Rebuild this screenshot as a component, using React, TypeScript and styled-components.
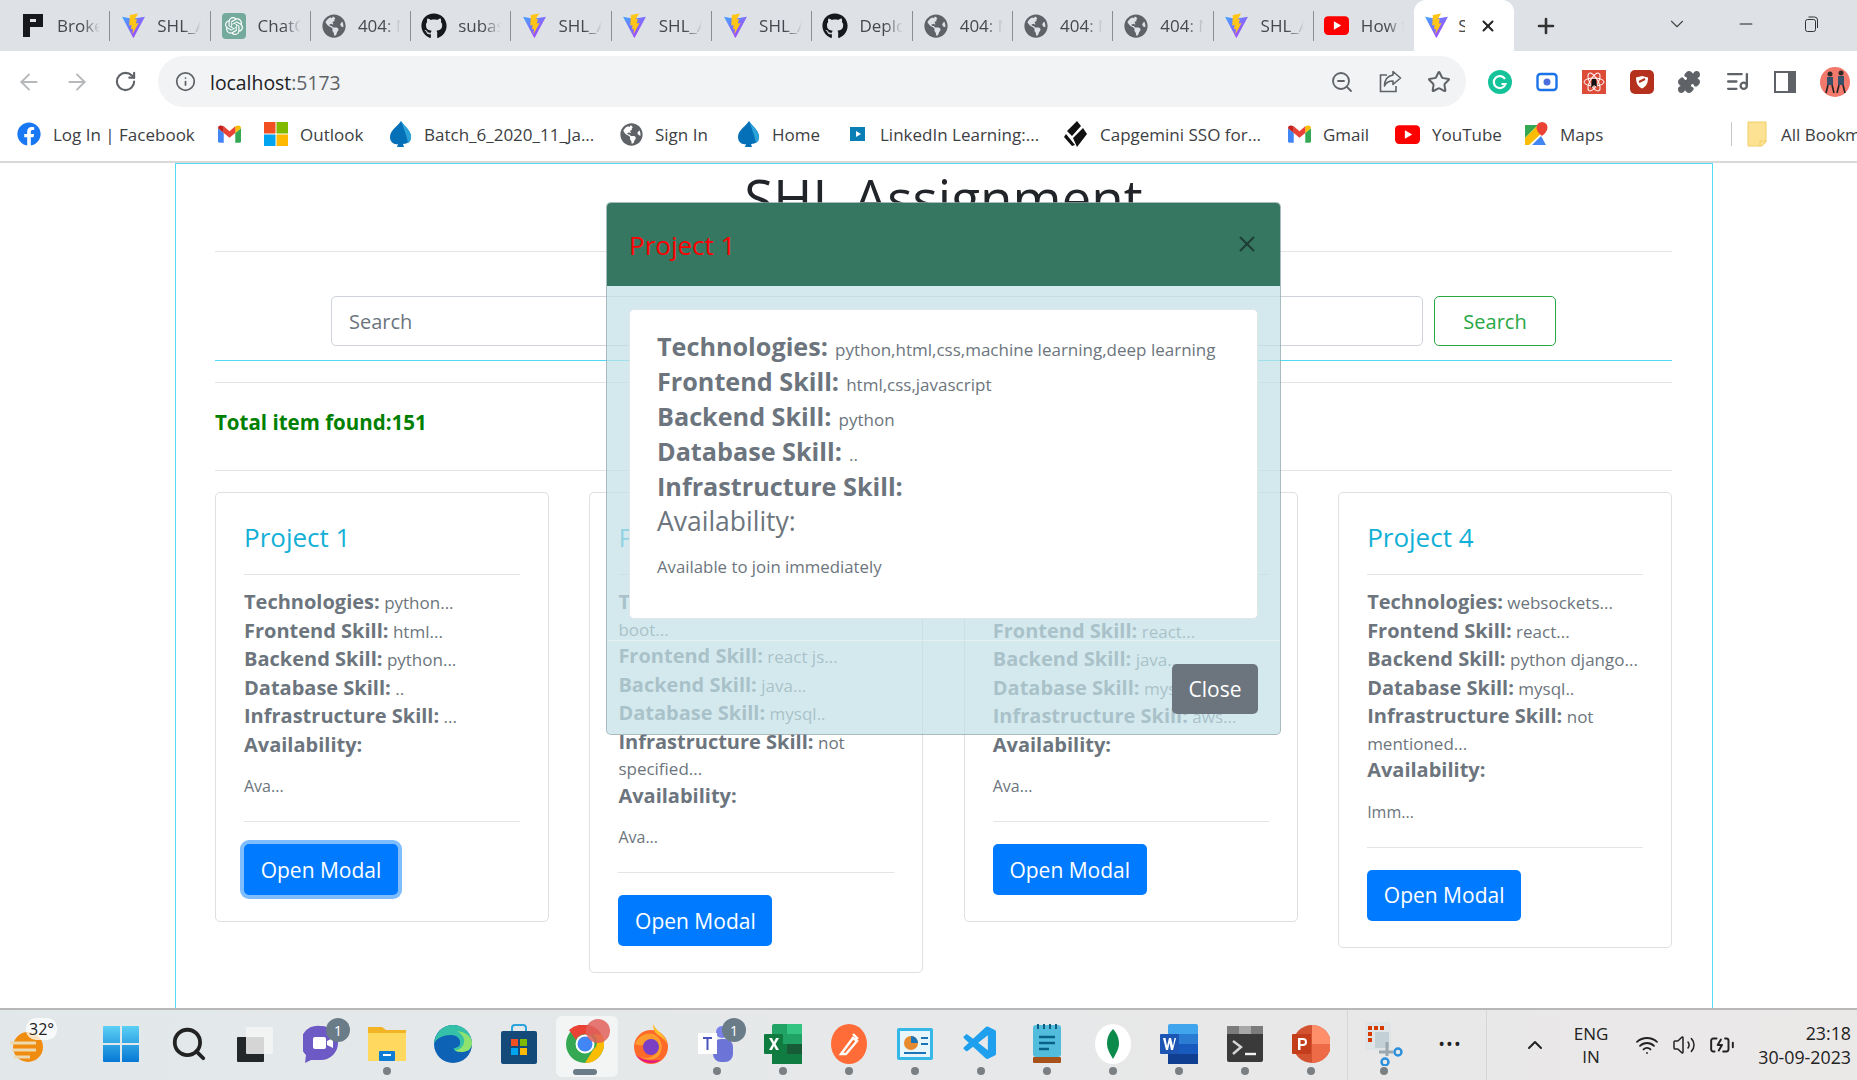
import React from 'react';
import styled, { createGlobalStyle } from 'styled-components';
import {
  ArrowLeft,
  ArrowRight,
  RotateCw,
  Info,
  ZoomOut,
  Star,
  Puzzle,
  ListMusic,
  X,
  Plus,
  ChevronDown,
  Minus,
  ChevronUp,
  Wifi,
  Volume2,
  BatteryCharging,
  Search as SearchGlyph,
} from 'lucide-react';
import { FaGithub, FaFacebook, FaGlobeAmericas } from 'react-icons/fa';
import { SiOpenai } from 'react-icons/si';
import { VscVscode } from 'react-icons/vsc';

const GlobalStyle = createGlobalStyle`
  * { box-sizing: border-box; }
  html, body { margin: 0; padding: 0; height: 100%; overflow: hidden; background: #fff; }
  body { font-family: "Open Sans", "Liberation Sans", sans-serif; }
`;

/* ---------- small drawings ---------- */

const Vite = () => (
  <svg width="25" height="25" viewBox="0 0 24 24">
    <defs>
      <linearGradient id="viteA" x1="0" y1="0" x2="1" y2="1">
        <stop offset="0" stopColor="#41a6ff" />
        <stop offset="1" stopColor="#bd34fe" />
      </linearGradient>
    </defs>
    <path d="M1 3.5 11 5.5 23 3.5 12.3 23.5a.5.5 0 0 1-.8 0z" fill="url(#viteA)" />
    <path d="M16.5.5 8.5 2l-.6 10 2.3-.5-.6 4 2-.5-.7 5.5 6-11-2.7.6 1.1-4.4-2.3.5z" fill="#ffc517" />
  </svg>
);

const PLogo = () => (
  <svg width="23" height="25" viewBox="0 0 23 25">
    <path d="M1 1h20v13H8v10H1z" fill="#16181c" />
    <path d="M8 6h6v3H8z" fill="#dee1e6" />
  </svg>
);

const GptBox = styled.span`
  width: 24px;
  height: 26px;
  border-radius: 4px;
  background: #74aa9c;
  display: flex;
  align-items: center;
  justify-content: center;
`;

const ChatIcon = () => (
  <GptBox>
    <SiOpenai size={18} color="#fff" />
  </GptBox>
);

const YouTube = () => (
  <svg width="25" height="25" viewBox="0 0 24 24">
    <rect x="0" y="3" width="24" height="18" rx="4" fill="#f00" />
    <path d="M9.5 8v8l7-4z" fill="#fff" />
  </svg>
);

const Gmail = () => (
  <svg width="23" height="18" viewBox="0 0 24 18">
    <path d="M0 3v13.5A1.5 1.5 0 0 0 1.5 18H6V8z" fill="#4285f4" />
    <path d="M24 3v13.5a1.5 1.5 0 0 1-1.5 1.5H18V8z" fill="#34a853" />
    <path d="M18 1v7l6-5c0-3-2.5-3.5-4-2.5z" fill="#fbbc04" />
    <path d="M6 8V1l6 5 6-5v7l-6 5z" fill="#ea4335" />
    <path d="M0 3c0-3 2.5-3.5 4-2.5L6 1v7z" fill="#c5221f" />
  </svg>
);

const Microsoft = () => (
  <svg width="24" height="24" viewBox="0 0 24 24">
    <rect width="11.5" height="11.5" fill="#f25022" />
    <rect x="12.5" width="11.5" height="11.5" fill="#7fba00" />
    <rect y="12.5" width="11.5" height="11.5" fill="#00a4ef" />
    <rect x="12.5" y="12.5" width="11.5" height="11.5" fill="#ffb900" />
  </svg>
);

const Spade = () => (
  <svg width="24" height="26" viewBox="0 0 24 26">
    <path d="M13 0C10 5 2 9 2 16c0 5 4 8 8 7l-1 3h7l-1-3c5 0 8-3 8-7 0-7-7-11-10-16z" fill="#0470b8" />
    <path d="M13 0c3 5 10 9 10 16 0 3-1 5-3 6-1-6-4-14-7-22z" fill="#2ba3d8" />
  </svg>
);

const Linked = () => (
  <svg width="20" height="20" viewBox="0 0 20 20">
    <rect x="2" y="3" width="15" height="14" fill="#0a7fb5" />
    <path d="M8 7v6l5-3z" fill="#fff" />
  </svg>
);

const Capgemini = () => (
  <svg width="24" height="26" viewBox="0 0 24 26">
    <path d="M13 0 3 10l5 5 9-10zM19 7 9 17l4 9 10-13zM2 13 0 16l8 9 3-1z" fill="#111" />
  </svg>
);

const MapsPin = () => (
  <svg width="24" height="24" viewBox="0 0 24 24">
    <path d="M1 3h13L1 16z" fill="#34a853" />
    <path d="M1 16 14 3l6 6L5 23H1z" fill="#fbbc04" />
    <path d="M8 23l9-9 5 9z" fill="#4285f4" />
    <path d="M18 0a5.5 5.5 0 0 0-5.5 5.5C12.5 10 18 14 18 14s5.5-4 5.5-8.5A5.5 5.5 0 0 0 18 0z" fill="#ea4335" />
  </svg>
);

const FolderSvg = styled.svg`
  flex: none;
  margin-right: 2px;
`;

const Folder = () => (
  <FolderSvg width="20" height="26" viewBox="0 0 20 26">
    <path d="M1 1h18v20l-4 4H1z" fill="#fde293" stroke="#f2cf66" />
    <path d="M13 25v-5h6" fill="none" stroke="#f2cf66" />
  </FolderSvg>
);

const ShareArrow = () => (
  <svg width="25" height="25" viewBox="0 0 25 25" fill="none" stroke="#5f6368" strokeWidth="1.6">
    <path d="M9 6H2.5v16.5H18V17" />
    <path d="M15 2.5l7.5 6.5-7.5 6.500v-3.500c-4 0-7 1.500-8.500 5 0-6 3-10 8.500-11z" strokeLinejoin="round" />
  </svg>
);

const Grammarly = () => (
  <svg width="24" height="24" viewBox="0 0 24 24">
    <circle cx="12" cy="12" r="12" fill="#15c39a" />
    <path d="M17 9a6 6 0 1 0 .5 5h-4" fill="none" stroke="#fff" strokeWidth="2.2" />
  </svg>
);

const Camera = () => (
  <svg width="22" height="20" viewBox="0 0 22 20">
    <rect x="1.5" y="2" width="19" height="16" rx="3" fill="#fff" stroke="#1a73e8" strokeWidth="2.4" />
    <circle cx="11" cy="10" r="3.5" fill="#4a6ee0" />
  </svg>
);

const RedAtom = () => (
  <svg width="24" height="24" viewBox="0 0 24 24">
    <rect width="24" height="24" fill="#dd4b39" />
    <g fill="none" stroke="#fff" strokeWidth="1">
      <ellipse cx="12" cy="12" rx="10" ry="4" />
      <ellipse cx="12" cy="12" rx="10" ry="4" transform="rotate(60 12 12)" />
      <ellipse cx="12" cy="12" rx="10" ry="4" transform="rotate(120 12 12)" />
    </g>
    <path d="M10 9h4l1 8-3-2-3 3z" fill="#111" />
  </svg>
);

const RedShield = () => (
  <svg width="24" height="24" viewBox="0 0 24 24">
    <rect width="24" height="24" rx="5" fill="#b6301e" />
    <path d="M12 6l6 1.5c0 6-2 9-6 11-4-2-6-5-6-11z" fill="#fff" />
    <path d="M9 12l6-3" stroke="#b6301e" strokeWidth="2" />
  </svg>
);

const SidePanel = () => (
  <svg width="22" height="22" viewBox="0 0 22 22">
    <path d="M1 1h20v20H1z" fill="none" stroke="#5f6368" strokeWidth="2" />
    <path d="M14 1h7v20h-7z" fill="#5f6368" />
  </svg>
);

const Avatar = () => (
  <svg width="30" height="30" viewBox="0 0 30 30">
    <circle cx="15" cy="15" r="15" fill="#f2796b" />
    <circle cx="10" cy="7" r="2.5" fill="#2d2a28" />
    <circle cx="21" cy="6" r="2.5" fill="#2d2a28" />
    <path d="M7 10h6v8H7zM18 9h6v9h-6z" fill="#37506b" />
    <path d="M8 18l-2 8M12 18l2 8M19 18l-2 8M23 18l2 8" stroke="#222" strokeWidth="1.6" />
  </svg>
);

const WindowsLogo = () => (
  <svg width="36" height="36" viewBox="0 0 36 36">
    <defs>
      <linearGradient id="win" x1="0" y1="0" x2="0" y2="1">
        <stop offset="0" stopColor="#5cd0f5" />
        <stop offset="1" stopColor="#0678d4" />
      </linearGradient>
    </defs>
    <path d="M0 1a1 1 0 0 1 1-1h16v17H0zM19 0h16a1 1 0 0 1 1 1v16H19zM0 19h17v17H1a1 1 0 0 1-1-1zM19 19h17v16a1 1 0 0 1-1 1H19z" fill="url(#win)" />
  </svg>
);

const TaskView = () => (
  <svg width="36" height="36" viewBox="0 0 36 36">
    <rect x="0" y="11" width="27" height="25" rx="1" fill="#24272a" />
    <rect x="9" y="1" width="27" height="27" rx="1" fill="#f4f5f5" fillOpacity="0.85" />
  </svg>
);

const Meet = () => (
  <svg width="36" height="40" viewBox="0 0 36 40">
    <path d="M18 2a17 17 0 0 1 0 34H8l-6 3 1-8A17 17 0 0 1 18 2z" fill="#6d5ac5" />
    <rect x="10" y="13" width="13" height="12" rx="2" fill="#fff" />
    <path d="M24 17l6-3v10l-6-3z" fill="#fff" />
  </svg>
);

const Explorer = () => (
  <svg width="38" height="38" viewBox="0 0 38 38">
    <path d="M0 2h14l4 3h20v31H0z" fill="#f2b324" />
    <path d="M0 8h38v28H0z" fill="#ffd860" />
    <rect x="11" y="26" width="16" height="10" rx="1" fill="#0c7cd5" />
    <rect x="15" y="29" width="8" height="2" fill="#fff" />
  </svg>
);

const Edge = () => (
  <svg width="38" height="38" viewBox="0 0 38 38">
    <circle cx="19" cy="19" r="19" fill="#0d62b5" />
    <path d="M0 19C1 7 10 0 19 0c11 0 19 9 19 18 0 7-6 9-11 9-6 0-8-3-7-4 3 0 7-2 6-7-1-4-5-6-9-6C10 10 2 13 0 19z" fill="#35c1a8" />
    <path d="M38 18c0 7-6 9-11 9-3 0-5-1-6-2 6 0 10-5 9-11-1-3-3-6-7-8 8 1 15 5 15 12z" fill="#8ee26d" />
  </svg>
);

const Store = () => (
  <svg width="36" height="40" viewBox="0 0 36 40">
    <path d="M11 8V4a3 3 0 0 1 3-3h8a3 3 0 0 1 3 3v4" fill="none" stroke="#2ba3dc" strokeWidth="2" />
    <rect y="7" width="36" height="33" rx="2" fill="#144a7a" />
    <rect x="10" y="15" width="7" height="7" fill="#f25022" />
    <rect x="19" y="15" width="7" height="7" fill="#7fba00" />
    <rect x="10" y="24" width="7" height="7" fill="#00a4ef" />
    <rect x="19" y="24" width="7" height="7" fill="#ffb900" />
  </svg>
);

const Chrome = () => (
  <svg width="38" height="38" viewBox="0 0 38 38">
    <circle cx="19" cy="19" r="19" fill="#34a853" />
    <path d="M19 0a19 19 0 0 1 16.5 9.5H19A9.5 9.5 0 0 0 10 15L3 5A19 19 0 0 1 19 0z" fill="#ea4335" />
    <path d="M35.5 9.5A19 19 0 0 1 19 38l8-13a9.5 9.5 0 0 0 0-15.5z" fill="#fbbc04" />
    <circle cx="19" cy="19" r="9.5" fill="#fff" />
    <circle cx="19" cy="19" r="7.5" fill="#4285f4" />
  </svg>
);

const Firefox = () => (
  <svg width="36" height="40" viewBox="0 0 36 40">
    <circle cx="18" cy="23" r="17" fill="#ff6a2b" />
    <path d="M20 0c3 7 12 10 14 19C28 10 20 12 20 0z" fill="#ffbd2e" />
    <path d="M2 20c3-8 12-12 18-10 8 3 11 12 7 20-3 5-12 8-19 3 8 3 16-1 15-9-1-5-8-6-13-3-3 1-5 0-8-1z" fill="#ff9c2e" />
    <circle cx="18" cy="23" r="8" fill="#7a3fc4" />
    <path d="M2 30c5 8 16 12 26 6-8 1-20 1-26-6z" fill="#e31587" />
  </svg>
);

const Teams = () => (
  <svg width="40" height="40" viewBox="0 0 40 40">
    <circle cx="25" cy="8" r="6" fill="#7b83eb" />
    <rect x="16" y="15" width="20" height="23" rx="8" fill="#6d74d8" />
    <rect x="1" y="9" width="19" height="21" fill="#fff" />
    <path d="M6 13h9v2h-3.5v11h-2V15H6z" fill="#4b53bc" />
  </svg>
);

const Excel = () => (
  <svg width="38" height="40" viewBox="0 0 38 40">
    <rect x="8" y="0" width="30" height="40" rx="2" fill="#21a366" />
    <rect x="8" y="20" width="30" height="20" fill="#107c41" />
    <rect x="23" y="0" width="15" height="10" fill="#33c481" />
    <rect x="23" y="20" width="15" height="10" fill="#185c37" />
    <rect x="0" y="10" width="19" height="20" rx="1" fill="#0f7b3f" />
    <path d="M5 14h3l2 4 2-4h3l-3.5 6 3.5 6h-3l-2-4-2 4H5l3.5-6z" fill="#fff" />
  </svg>
);

const Postman = () => (
  <svg width="36" height="40" viewBox="0 0 36 40">
    <ellipse cx="18" cy="20" rx="18" ry="20" fill="#ff6c37" />
    <path d="M10 30l12-16 4 3-11 13zM22 10l5 5" stroke="#fff" strokeWidth="2.4" fill="none" />
  </svg>
);

const Whiteboard = () => (
  <svg width="36" height="36" viewBox="0 0 36 36">
    <rect x="0" y="2" width="36" height="32" rx="2" fill="#35b8e8" />
    <rect x="3" y="5" width="30" height="26" fill="#e8f6fb" />
    <circle cx="14" cy="17" r="7" fill="#e78a2f" />
    <path d="M14 17V10a7 7 0 0 1 7 7z" fill="#1b73b8" />
    <path d="M24 12h7M24 18h7M7 27h22" stroke="#1b73b8" strokeWidth="2" />
  </svg>
);

const Notepad = () => (
  <svg width="30" height="40" viewBox="0 0 30 40">
    <rect x="1" y="1" width="28" height="32" rx="3" fill="#52bcdc" />
    <path d="M7 13h16M7 19h16M7 25h10" stroke="#08628a" strokeWidth="2.4" />
    <path d="M6 0v5M12 0v5M18 0v5M24 0v5" stroke="#0d5d80" strokeWidth="2" />
    <rect x="1" y="33" width="28" height="6" rx="1" fill="#a6521a" />
  </svg>
);

const Mongo = () => (
  <svg width="36" height="40" viewBox="0 0 36 40">
    <ellipse cx="18" cy="20" rx="18" ry="20" fill="#fff" />
    <path d="M18 5c5 5 6 11 6 15s-3 10-6 15c-3-5-6-10-6-15s1-10 6-15z" fill="#0c8a4c" />
  </svg>
);

const Word = () => (
  <svg width="38" height="40" viewBox="0 0 38 40">
    <rect x="8" y="0" width="30" height="40" rx="2" fill="#41a5ee" />
    <rect x="8" y="10" width="30" height="10" fill="#2b7cd3" />
    <rect x="8" y="20" width="30" height="10" fill="#185abd" />
    <rect x="8" y="30" width="30" height="10" fill="#103f91" />
    <rect x="0" y="10" width="19" height="20" rx="1" fill="#1d55b5" />
    <path d="M3 14h2.5l1.5 8 2-8h2l2 8 1.5-8H16l-3 12h-2l-1.5-7L8 26H6z" fill="#fff" />
  </svg>
);

const TerminalIcon = () => (
  <svg width="36" height="36" viewBox="0 0 36 36">
    <rect width="36" height="36" rx="2" fill="#3a3a3a" />
    <rect width="36" height="8" fill="#7c7c7c" />
    <rect x="12" width="12" height="8" fill="#a8a8a8" />
    <path d="M6 15l8 6-8 7" stroke="#d6d6d6" strokeWidth="2.4" fill="none" />
    <path d="M18 28h11" stroke="#f2f2f2" strokeWidth="2.4" />
  </svg>
);

const Powerpoint = () => (
  <svg width="38" height="40" viewBox="0 0 38 40">
    <circle cx="20" cy="20" r="19" fill="#d35230" />
    <path d="M20 1a19 19 0 0 1 19 19H20z" fill="#ff8f6b" />
    <path d="M20 20h19a19 19 0 0 1-19 19z" fill="#ed6c47" />
    <rect x="0" y="10" width="19" height="20" rx="1" fill="#c43e1c" />
    <path d="M6 14h5a4 4 0 0 1 0 8H8.5v4H6zM8.5 16v4H11a2 2 0 0 0 0-4z" fill="#fff" />
  </svg>
);

const Snip = () => (
  <svg width="38" height="44" viewBox="0 0 38 44">
    <rect x="0" y="0" width="26" height="28" rx="3" fill="#dfe4e6" />
    <path d="M3 4h4v4H3zM9 4h4v4H9zM15 4h4v4h-4zM3 10h4v4H3zM3 16h4v4H3z" fill="#d83b01" />
    <path d="M10 10h14v16H10z" fill="#c3d0d6" />
    <path d="M22 20v14M14 30h14" stroke="#9aa7ad" strokeWidth="3" />
    <circle cx="33" cy="30" r="3.5" fill="none" stroke="#2a8fdc" strokeWidth="2.4" />
    <circle cx="20" cy="40" r="3.5" fill="none" stroke="#2a8fdc" strokeWidth="2.4" />
  </svg>
);

const Weather = () => (
  <svg width="34" height="36" viewBox="0 0 34 36">
    <circle cx="18" cy="18" r="15" fill="#f08c10" />
    <path d="M0 14h26M2 21h24M4 28h16" stroke="#ecd9b0" strokeWidth="3" />
  </svg>
);

/* ---------- data ---------- */

const tabs = [
  { icon: <PLogo />, label: 'Broker' },
  { icon: <Vite />, label: 'SHL_Assignment' },
  { icon: <ChatIcon />, label: 'ChatGPT' },
  { icon: <FaGlobeAmericas size={24} color="#5f6368" />, label: '404: Not' },
  { icon: <FaGithub size={26} color="#16181c" />, label: 'subashree' },
  { icon: <Vite />, label: 'SHL_Assignment' },
  { icon: <Vite />, label: 'SHL_Assignment' },
  { icon: <Vite />, label: 'SHL_Assignment' },
  { icon: <FaGithub size={26} color="#16181c" />, label: 'Deploy' },
  { icon: <FaGlobeAmericas size={24} color="#5f6368" />, label: '404: Not' },
  { icon: <FaGlobeAmericas size={24} color="#5f6368" />, label: '404: Not' },
  { icon: <FaGlobeAmericas size={24} color="#5f6368" />, label: '404: Not' },
  { icon: <Vite />, label: 'SHL_Assignment' },
  { icon: <YouTube />, label: 'How to' },
];

const bookmarks = [
  { icon: <FaFacebook size={24} color="#1877f2" />, label: 'Log In | Facebook', width: 201 },
  { icon: <Gmail />, label: '', width: 46 },
  { icon: <Microsoft />, label: 'Outlook', width: 124 },
  { icon: <Spade />, label: 'Batch_6_2020_11_Ja...', width: 232 },
  { icon: <FaGlobeAmericas size={23} color="#5f6368" />, label: 'Sign In', width: 116 },
  { icon: <Spade />, label: 'Home', width: 112 },
  { icon: <Linked />, label: 'LinkedIn Learning:...', width: 216 },
  { icon: <Capgemini />, label: 'Capgemini SSO for...', width: 224 },
  { icon: <Gmail />, label: 'Gmail', width: 107 },
  { icon: <YouTube />, label: 'YouTube', width: 129 },
  { icon: <MapsPin />, label: 'Maps', width: 207 },
];

type Line = { label: string; value?: string };

type Project = {
  title: string;
  lines: Line[];
  availability: string;
  focused?: boolean;
};

const projects: Project[] = [
  {
    title: 'Project 1',
    lines: [
      { label: 'Technologies:', value: 'python...' },
      { label: 'Frontend Skill:', value: 'html...' },
      { label: 'Backend Skill:', value: 'python...' },
      { label: 'Database Skill:', value: '..' },
      { label: 'Infrastructure Skill:', value: '...' },
    ],
    availability: 'Ava...',
    focused: true,
  },
  {
    title: 'Project 2',
    lines: [
      { label: 'Technologies:', value: 'react,java,spring boot...' },
      { label: 'Frontend Skill:', value: 'react js...' },
      { label: 'Backend Skill:', value: 'java...' },
      { label: 'Database Skill:', value: 'mysql..' },
      { label: 'Infrastructure Skill:', value: 'not specified...' },
    ],
    availability: 'Ava...',
  },
  {
    title: 'Project 3',
    lines: [
      { label: 'Technologies:', value: 'java...' },
      { label: 'Frontend Skill:', value: 'react...' },
      { label: 'Backend Skill:', value: 'java...' },
      { label: 'Database Skill:', value: 'mysql..' },
      { label: 'Infrastructure Skill:', value: 'aws...' },
    ],
    availability: 'Ava...',
  },
  {
    title: 'Project 4',
    lines: [
      { label: 'Technologies:', value: 'websockets...' },
      { label: 'Frontend Skill:', value: 'react...' },
      { label: 'Backend Skill:', value: 'python django...' },
      { label: 'Database Skill:', value: 'mysql..' },
      { label: 'Infrastructure Skill:', value: 'not mentioned...' },
    ],
    availability: 'Imm...',
  },
];

const modalLines: Line[] = [
  { label: 'Technologies:', value: 'python,html,css,machine learning,deep learning' },
  { label: 'Frontend Skill:', value: 'html,css,javascript' },
  { label: 'Backend Skill:', value: 'python' },
  { label: 'Database Skill:', value: '..' },
  { label: 'Infrastructure Skill:' },
];

const taskIcons = [
  { icon: <WindowsLogo /> },
  { icon: <SearchGlyph size={38} color="#222" strokeWidth={2.4} /> },
  { icon: <TaskView /> },
  { icon: <Meet />, badge: '1' },
  { icon: <Explorer />, dot: true },
  { icon: <Edge /> },
  { icon: <Store /> },
  { icon: <Chrome />, active: true },
  { icon: <Firefox /> },
  { icon: <Teams />, badge: '1', dot: true },
  { icon: <Excel />, dot: true },
  { icon: <Postman />, dot: true },
  { icon: <Whiteboard />, dot: true },
  { icon: <VscVscode size={40} color="#1ea0ee" />, dot: true },
  { icon: <Notepad />, dot: true },
  { icon: <Mongo />, dot: true },
  { icon: <Word />, dot: true },
  { icon: <TerminalIcon />, dot: true },
  { icon: <Powerpoint />, dot: true },
];

/* ---------- component ---------- */

const App = () => {
  return (
    <Screen>
      <GlobalStyle />
      <TabStrip>
        {tabs.map((tab, i) => (
          <Tab key={i} $last={i === tabs.length - 1}>
            <Favicon>{tab.icon}</Favicon>
            <TabLabel>{tab.label}</TabLabel>
          </Tab>
        ))}
        <ActiveTab>
          <Favicon>
            <Vite />
          </Favicon>
          <ActiveLabel>SHL</ActiveLabel>
          <X size={18} color="#222" strokeWidth={2.6} />
        </ActiveTab>
        <NewTab>
          <Plus size={24} color="#333" strokeWidth={2.6} />
        </NewTab>
        <WindowControls>
          <ChevronDown size={22} color="#444" strokeWidth={1.2} />
          <Minus size={20} color="#222" strokeWidth={1.4} />
          <RestoreIcon />
        </WindowControls>
      </TabStrip>

      <Toolbar>
        <NavButton>
          <ArrowLeft size={26} color="#b6b8bb" strokeWidth={1.8} />
        </NavButton>
        <NavButton>
          <ArrowRight size={26} color="#b6b8bb" strokeWidth={1.8} />
        </NavButton>
        <NavButton>
          <RotateCw size={23} color="#5f6368" strokeWidth={2.2} />
        </NavButton>
        <Omnibox>
          <Info size={21} color="#5f6368" strokeWidth={2} />
          <Url>
            localhost<UrlPort>:5173</UrlPort>
          </Url>
          <OmniActions>
            <ZoomOut size={24} color="#5f6368" strokeWidth={1.8} />
            <ShareArrow />
            <Star size={24} color="#5f6368" strokeWidth={2} />
          </OmniActions>
        </Omnibox>
        <Extensions>
          <Grammarly />
          <Camera />
          <RedAtom />
          <RedShield />
          <Puzzle size={24} color="#5f6368" fill="#5f6368" />
          <ListMusic size={25} color="#5f6368" strokeWidth={2.2} />
          <SidePanel />
          <Avatar />
        </Extensions>
      </Toolbar>

      <BookmarkBar>
        {bookmarks.map((b, i) => (
          <Bookmark key={i} $width={b.width}>
            <BookmarkIcon>{b.icon}</BookmarkIcon>
            {b.label && <span>{b.label}</span>}
          </Bookmark>
        ))}
        <BookmarkDivider />
        <Bookmark $width={200}>
          <Folder />
          <span>All Bookmarks</span>
        </Bookmark>
      </BookmarkBar>

      <Viewport>
        <Container>
          <Heading>SHL Assignment</Heading>
          <Rule />
          <SearchRow>
            <SearchInput placeholder="Search" readOnly />
            <SearchButton>Search</SearchButton>
          </SearchRow>
          <Rule $gap={21} />
          <TotalLine>Total item found:151</TotalLine>
          <Rule />
          <CardGrid>
            {projects.map((project) => (
              <Card key={project.title}>
                <CardTitle>{project.title}</CardTitle>
                <CardRule />
                <CardText>
                  {project.lines.map((line) => (
                    <div key={line.label}>
                      <CardLabel>{line.label}</CardLabel> <span>{line.value}</span>
                    </div>
                  ))}
                  <div>
                    <CardLabel>Availability:</CardLabel>
                  </div>
                </CardText>
                <CardNote>{project.availability}</CardNote>
                <CardRule />
                <OpenButton $focused={project.focused}>Open Modal</OpenButton>
              </Card>
            ))}
          </CardGrid>
        </Container>

        <Modal>
          <ModalHeader>
            <ModalTitle>Project 1</ModalTitle>
            <X size={26} color="#1f3d34" strokeWidth={1.8} />
          </ModalHeader>
          <ModalBody>
            <DetailCard>
              {modalLines.map((line) => (
                <DetailLine key={line.label}>
                  <DetailLabel>{line.label}</DetailLabel> <DetailValue>{line.value}</DetailValue>
                </DetailLine>
              ))}
              <DetailLine>
                <DetailPlain>Availability:</DetailPlain>
              </DetailLine>
              <DetailNote>Available to join immediately</DetailNote>
            </DetailCard>
          </ModalBody>
          <ModalFooter>
            <CloseButton>Close</CloseButton>
          </ModalFooter>
        </Modal>
      </Viewport>

      <Taskbar>
        <WeatherSlot>
          <Weather />
          <Temp>32°</Temp>
        </WeatherSlot>
        <TaskIcons>
          {taskIcons.map((t, i) => (
            <TaskItem key={i} $active={t.active}>
              {t.icon}
              {t.badge && <Badge>{t.badge}</Badge>}
              {t.dot && <RunDot />}
              {t.active && <ActiveBar />}
              {t.active && <ChromeProfile />}
            </TaskItem>
          ))}
        </TaskIcons>
        <TaskDivider />
        <TaskItem>
          <Snip />
          <RunDot />
        </TaskItem>
        <TaskItem>
          <MoreDots>•••</MoreDots>
        </TaskItem>
        <TaskDivider />
        <Tray>
          <ChevronUp size={24} color="#222" strokeWidth={2} />
          <Lang>
            <span>ENG</span>
            <span>IN</span>
          </Lang>
          <TrayIcons>
            <Wifi size={24} color="#222" strokeWidth={1.8} />
            <Volume2 size={24} color="#222" strokeWidth={1.5} />
            <BatteryCharging size={26} color="#222" strokeWidth={1.8} />
          </TrayIcons>
          <Clock>
            <span>23:18</span>
            <span>30-09-2023</span>
          </Clock>
        </Tray>
      </Taskbar>
    </Screen>
  );
};

const RestoreIcon = () => (
  <svg width="16" height="18" viewBox="0 0 16 18" fill="none" stroke="#333" strokeWidth="1">
    <rect x="1.5" y="4.5" width="10" height="12" rx="2" />
    <path d="M4.5 2h6a3 3 0 0 1 3 3v8" />
  </svg>
);

const Screen = styled.div`
  width: 1857px;
  height: 1080px;
  display: flex;
  flex-direction: column;
  overflow: hidden;
  color: #212529;
`;

const TabStrip = styled.div`
  height: 51px;
  flex: none;
  display: flex;
  align-items: flex-end;
  padding-left: 10px;
  background: #dee1e6;
`;

const Tab = styled.div<{ $last?: boolean }>`
  width: 100.3px;
  height: 51px;
  flex: none;
  display: flex;
  align-items: center;
  gap: 11px;
  padding: 0 10px;
  position: relative;
  &::after {
    content: '';
    display: ${(p) => (p.$last ? 'none' : 'block')};
    position: absolute;
    right: 0;
    top: 11px;
    height: 30px;
    width: 1px;
    background: #8a8d91;
  }
`;

const Favicon = styled.span`
  width: 26px;
  flex: none;
  display: flex;
  align-items: center;
  justify-content: center;
`;

const TabLabel = styled.span`
  font-size: 17px;
  color: #45484c;
  white-space: nowrap;
  overflow: hidden;
  flex: 1;
  min-width: 0;
  -webkit-mask-image: linear-gradient(to right, #000 60%, transparent 100%);
  mask-image: linear-gradient(to right, #000 60%, transparent 100%);
`;

const ActiveTab = styled.div`
  width: 100px;
  height: 51px;
  flex: none;
  display: flex;
  align-items: center;
  padding: 0 10px 0 9px;
  background: #fff;
  border-radius: 12px 12px 0 0;
  gap: 9px;
`;

const ActiveLabel = styled.span`
  width: 7px;
  overflow: hidden;
  font-size: 17px;
  color: #45484c;
  margin-right: 5px;
`;

const NewTab = styled.div`
  width: 64px;
  height: 51px;
  display: flex;
  align-items: center;
  justify-content: center;
`;

const WindowControls = styled.div`
  flex: 1;
  height: 51px;
  display: flex;
  align-items: center;
  justify-content: flex-end;
  gap: 48px;
  padding: 0 37px 4px 0;
`;

const Toolbar = styled.div`
  height: 61px;
  flex: none;
  display: flex;
  align-items: center;
  padding: 0 7px 0 5px;
  background: #fff;
`;

const NavButton = styled.span`
  width: 48px;
  flex: none;
  display: flex;
  justify-content: center;
`;

const Omnibox = styled.div`
  width: 1308px;
  height: 51px;
  margin-left: 9px;
  flex: none;
  display: flex;
  align-items: center;
  padding: 0 15px 0 17px;
  background: #f1f3f4;
  border-radius: 26px;
`;

const Url = styled.span`
  margin-left: 14px;
  padding-top: 1px;
  font-size: 19.4px;
  color: #202124;
`;

const UrlPort = styled.span`
  color: #5f6368;
`;

const OmniActions = styled.span`
  margin-left: auto;
  display: flex;
  align-items: center;
  gap: 24px;
`;

const Extensions = styled.div`
  flex: 1;
  display: flex;
  align-items: center;
  justify-content: space-between;
  padding: 0 0 0 22px;
`;

const BookmarkBar = styled.div`
  height: 51px;
  flex: none;
  display: flex;
  align-items: center;
  padding: 0 0 5px 17px;
  background: #fff;
  border-bottom: 2px solid #d9d9d9;
  overflow: hidden;
`;

const Bookmark = styled.div<{ $width: number }>`
  width: ${(p) => p.$width}px;
  flex: none;
  display: flex;
  align-items: center;
  gap: 12px;
  font-size: 17px;
  color: #3c4043;
  white-space: nowrap;
`;

const BookmarkIcon = styled.span`
  display: flex;
  align-items: center;
  flex: none;
`;

const BookmarkDivider = styled.span`
  width: 1px;
  height: 24px;
  margin-right: 15px;
  background: #c4c7c5;
  flex: none;
`;

const Viewport = styled.main`
  flex: 1;
  min-height: 0;
  position: relative;
  overflow: hidden;
  background: #fff;
`;

const Container = styled.div`
  width: 1538px;
  height: 100%;
  margin-left: 175px;
  padding: 0 40px 0 39px;
  border: 1px solid #50dcf2;
  border-bottom: none;
`;

const Heading = styled.h1`
  margin: 0;
  height: 87px;
  font-size: 53px;
  font-weight: 400;
  line-height: 68px;
  text-align: center;
  color: #212529;
`;

const Rule = styled.hr<{ $gap?: number }>`
  margin: ${(p) => p.$gap ?? 0}px 0 0;
  border: none;
  border-top: 1px solid #e4e4e4;
`;

const SearchRow = styled.div`
  display: flex;
  justify-content: center;
  gap: 11px;
  margin-top: 44px;
  padding: 0 116px 14px;
  border-bottom: 1px solid #50dcf2;
`;

const SearchInput = styled.input`
  flex: 1;
  height: 50px;
  padding: 0 17px;
  font: 400 20px "Open Sans", sans-serif;
  color: #495057;
  border: 1px solid #ced4da;
  border-radius: 5px;
  outline: none;
  &::placeholder {
    color: #6c757d;
  }
`;

const SearchButton = styled.button`
  width: 122px;
  height: 50px;
  font: 400 20px "Open Sans", sans-serif;
  color: #28a745;
  background: #fff;
  border: 1px solid #28a745;
  border-radius: 5px;
`;

const TotalLine = styled.div`
  height: 87px;
  padding-top: 24px;
  font-size: 20.5px;
  line-height: 30px;
  font-weight: 700;
  color: #008000;
`;

const CardGrid = styled.div`
  display: grid;
  grid-template-columns: repeat(4, 1fr);
  gap: 40.5px;
  align-items: start;
  margin-top: 21px;
`;

const Card = styled.article`
  padding: 25px 28px 26px;
  background: #fff;
  border: 1px solid #dfdfdf;
  border-radius: 5px;
`;

const CardTitle = styled.h5`
  margin: 0 0 18px;
  font-size: 26px;
  font-weight: 400;
  line-height: 38px;
  color: #12b0d6;
`;

const CardRule = styled.hr`
  margin: 0;
  border: none;
  border-top: 1px solid #e4e4e4;
`;

const CardText = styled.div`
  margin-top: 13px;
  font-size: 17px;
  line-height: 25.5px;
  color: #6c757d;
`;

const CardLabel = styled.strong`
  font-size: 20px;
  line-height: 28.5px;
  font-weight: 700;
`;

const CardNote = styled.p`
  margin: 13px 0 21px;
  font-size: 16px;
  line-height: 28px;
  color: #6c757d;
`;

const OpenButton = styled.button<{ $focused?: boolean }>`
  display: block;
  width: 154px;
  height: 51px;
  margin-top: 22px;
  font: 400 21px "Open Sans", sans-serif;
  color: #fff;
  background: #007bff;
  border: none;
  border-radius: 5px;
  box-shadow: ${(p) => (p.$focused ? '0 0 0 4px rgba(0, 123, 255, 0.5)' : 'none')};
`;

const Modal = styled.section`
  position: absolute;
  left: 606px;
  top: 39px;
  width: 675px;
  height: 533px;
  display: flex;
  flex-direction: column;
  background: rgba(195, 224, 231, 0.71);
  border: 1px solid rgba(0, 0, 0, 0.2);
  border-radius: 5px;
  overflow: hidden;
`;

const ModalHeader = styled.header`
  height: 83px;
  flex: none;
  display: flex;
  align-items: center;
  justify-content: space-between;
  padding: 0 20px 2px 22px;
  background: #367762;
`;

const ModalTitle = styled.h5`
  margin: 0;
  padding-top: 2px;
  font-size: 26px;
  font-weight: 400;
  color: #ff0000;
`;

const ModalBody = styled.div`
  flex: 1;
  padding: 23px 22px 21px;
`;

const DetailCard = styled.div`
  height: 310px;
  padding: 19px 27px 0;
  background: #fff;
  border: 1px solid #e3e6e8;
  border-radius: 5px;
  color: #6c757d;
`;

const DetailLine = styled.div`
  height: 35px;
  line-height: 35px;
  white-space: nowrap;
`;

const DetailLabel = styled.strong`
  font-size: 25.2px;
  font-weight: 700;
`;

const DetailValue = styled.span`
  font-size: 17px;
  margin-left: 3px;
`;

const DetailPlain = styled.span`
  font-size: 26.5px;
  font-weight: 500;
`;

const DetailNote = styled.p`
  margin: 14px 0 0;
  font-size: 16.8px;
  line-height: 28px;
`;

const ModalFooter = styled.footer`
  height: 95px;
  flex: none;
  display: flex;
  align-items: center;
  justify-content: flex-end;
  padding: 1px 22px 0;
  border-top: 1px solid #e6eff2;
`;

const CloseButton = styled.button`
  width: 86px;
  height: 50px;
  font: 400 21px "Open Sans", sans-serif;
  color: #fff;
  background: #6c757d;
  border: none;
  border-radius: 5px;
`;

const Taskbar = styled.footer`
  height: 72px;
  flex: none;
  display: flex;
  align-items: center;
  padding-left: 10px;
  background: linear-gradient(to right, #e2e8ea, #ebe8e8);
  border-top: 2px solid #b8b8b8;
`;

const WeatherSlot = styled.div`
  width: 78px;
  flex: none;
  position: relative;
  display: flex;
  padding-top: 4px;
`;

const Temp = styled.span`
  position: absolute;
  left: 16px;
  top: -7px;
  padding: 0 3px;
  font-size: 16px;
  color: #222;
  background: rgba(255, 255, 255, 0.75);
  border-radius: 10px;
`;

const TaskIcons = styled.div`
  display: flex;
  & > div:first-child {
    margin-right: 2px;
  }
`;

const TaskItem = styled.div<{ $active?: boolean }>`
  width: 66px;
  height: 70px;
  flex: none;
  position: relative;
  display: flex;
  align-items: center;
  justify-content: center;
  padding-bottom: 2px;
  &::before {
    content: '';
    display: ${(p) => (p.$active ? 'block' : 'none')};
    position: absolute;
    left: 4px;
    right: 2px;
    top: 6px;
    bottom: 3px;
    background: rgba(255, 255, 255, 0.55);
    border-radius: 6px;
    box-shadow: 2px 0 0 rgba(255, 255, 255, 0.5);
  }
  & > svg {
    position: relative;
  }
`;

const Badge = styled.span`
  position: absolute;
  right: 4px;
  top: 8px;
  width: 24px;
  height: 24px;
  border-radius: 50%;
  background: #6a7c88;
  color: #fff;
  font-size: 14px;
  display: flex;
  align-items: center;
  justify-content: center;
`;

const RunDot = styled.span`
  position: absolute;
  left: 50%;
  bottom: 5px;
  width: 8px;
  height: 8px;
  margin-left: -4px;
  border-radius: 50%;
  background: #7a7f83;
`;

const ActiveBar = styled.span`
  position: absolute;
  left: 50%;
  bottom: 5px;
  width: 24px;
  height: 6px;
  margin-left: -12px;
  border-radius: 3px;
  background: #6a7c88;
`;

const ChromeProfile = styled.span`
  position: absolute;
  right: 8px;
  top: 9px;
  width: 24px;
  height: 24px;
  border-radius: 50%;
  background: rgba(226, 96, 90, 0.85);
`;

const TaskDivider = styled.span`
  width: 1px;
  height: 70px;
  flex: none;
  margin: 0 3px;
  background: #d4d6d7;
`;

const MoreDots = styled.span`
  font-size: 18px;
  letter-spacing: 1px;
  color: #222;
`;

const Tray = styled.div`
  flex: 1;
  display: flex;
  align-items: center;
  padding: 0 6px 0 33px;
  color: #222;
`;

const Lang = styled.div`
  width: 60px;
  margin-left: 14px;
  display: flex;
  flex-direction: column;
  align-items: center;
  font-size: 17px;
  line-height: 23px;
`;

const TrayIcons = styled.div`
  display: flex;
  align-items: center;
  gap: 13px;
  margin-left: 14px;
`;

const Clock = styled.div`
  margin-left: auto;
  display: flex;
  flex-direction: column;
  align-items: flex-end;
  font-size: 17.8px;
  line-height: 24px;
`;

export default App;
